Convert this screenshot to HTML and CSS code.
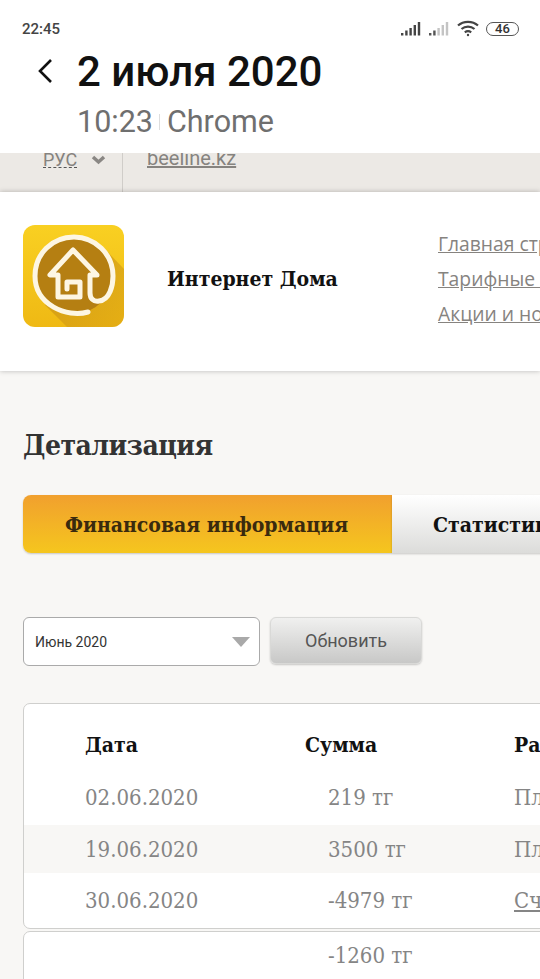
FILE: index.html
```html
<!DOCTYPE html>
<html lang="ru">
<head>
    <meta charset="UTF-8">
    <meta name="viewport" content="width=device-width, initial-scale=1.0">
    <title>Детализация</title>
    <link rel="stylesheet" href="styles.css">
</head>
<body>

    <header class="history-bar">
        <div class="status-bar">
            <span class="status-time">22:45</span>
            <div class="status-icons">
                <svg width="21" height="16" viewBox="0 0 21 16"><g fill="#444"><rect x="0" y="12" width="2.4" height="2.5"/><rect x="4.2" y="9.5" width="2.4" height="5"/><rect x="8.4" y="7" width="2.4" height="7.5"/><rect x="12.6" y="4" width="2.4" height="10.5"/><rect x="16.8" y="1" width="2.4" height="13.5"/></g></svg>
                <svg width="21" height="16" viewBox="0 0 21 16"><rect x="0" y="12" width="2.4" height="2.5" fill="#555"/><rect x="4.2" y="9.5" width="2.4" height="5" fill="#555"/><g fill="#c4c4c4"><rect x="8.4" y="7" width="2.4" height="7.5"/><rect x="12.6" y="4" width="2.4" height="10.5"/><rect x="16.8" y="1" width="2.4" height="13.5"/></g></svg>
                <svg class="wifi" width="22" height="17" viewBox="0 0 22 17" fill="none" stroke="#444" stroke-width="2.2"><path d="M1 5.5C6.5 .6 15.500 .6 21 5.500"/><path d="M4.500 9C8.200 5.800 13.800 5.800 17.500 9"/><path d="M7.800 12.300C9.800 10.800 12.200 10.800 14.200 12.300"/><circle cx="11" cy="15" r="1.200" fill="#444" stroke="none"/></svg>
                <span class="battery">46</span>
            </div>
        </div>
        <div class="history-title">
            <svg class="back" width="16" height="26" viewBox="0 0 16 26" fill="none" stroke="#111" stroke-width="2.600"><path d="M14 2 3 13l11 11"/></svg>
            <div>
                <h1>2 июля 2020</h1>
                <p class="visit"><span>10:23</span><i></i><span>Chrome</span></p>
            </div>
        </div>
    </header>

    <div class="top-strip">
        <div class="lang"><span>РУС</span>
            <svg width="15" height="10" viewBox="0 0 15 10" fill="none" stroke="#8a8784" stroke-width="3.500"><path d="M2 2l5.500 5L13 2"/></svg>
        </div>
        <a class="site-link" href="#">beeline.kz</a>
    </div>

    <section class="brand-band">
        <svg class="app-icon" width="101" height="102" viewBox="0 0 101 102">
            <defs>
                <linearGradient id="iconbg" x1="0" y1="0" x2="0" y2="1">
                    <stop offset="0" stop-color="#f9d022"/>
                    <stop offset="1" stop-color="#efb914"/>
                </linearGradient>
                <linearGradient id="iconshade" x1="0" y1="0" x2="1" y2="1">
                    <stop offset="0" stop-color="#b9821a" stop-opacity=".7"/>
                    <stop offset="1" stop-color="#d9a012" stop-opacity=".45"/>
                </linearGradient>
            </defs>
            <rect width="101" height="102" rx="12" fill="url(#iconbg)"/>
            <path d="M80 22 101 44V90a12 12 0 0 1-12 12H44L22 80Z" fill="url(#iconshade)"/>
            <circle cx="51" cy="51" r="38" fill="#b57f12"/>
            <g fill="none" stroke="#fdf6e3" stroke-width="5" stroke-linecap="round" stroke-linejoin="round">
                <path d="M65 87C44 93 12 80 12 51 12 29 29 12 51 12 72 12 90 29 90 51 90 60 87 75 76 76 70 77 67 73 67 68V50H74L50 25 27 50H35V72H57V57H44V64"/>
            </g>
        </svg>
        <strong class="brand-name">Интернет Дома</strong>
        <nav class="brand-nav">
            <a href="#">Главная страница</a>
            <a href="#">Тарифные планы</a>
            <a href="#">Акции и новости</a>
        </nav>
    </section>

    <main class="content">
        <h2>Детализация</h2>

        <div class="tabs">
            <div class="tab tab-active">Финансовая информация</div>
            <div class="tab">Статистика</div>
        </div>

        <form class="filter">
            <div class="month-select">Июнь 2020<i class="arrow"></i></div>
            <button type="button" class="refresh">Обновить</button>
        </form>

        <div class="table-box">
            <div class="row row-head"><span>Дата</span><span>Сумма</span><span>Расшифровка</span></div>
            <div class="row"><span>02.06.2020</span><span class="amount">219 тг</span><span>Платёж</span></div>
            <div class="row row-alt"><span>19.06.2020</span><span class="amount">3500 тг</span><span>Платёж</span></div>
            <div class="row"><span>30.06.2020</span><span class="amount">-4979 тг</span><span><a href="#">Счёт</a></span></div>
        </div>
        <div class="table-box total-box">
            <div class="row"><span></span><span class="amount">-1260 тг</span><span></span></div>
        </div>
    </main>

</body>
</html>
```

FILE: styles.css
```css
* {
    box-sizing: border-box;
}

html, body {
    margin: 0;
    height: 979px;
    overflow: hidden;
}

body {
    width: 540px;
    font-family: "DejaVu Serif Condensed", "DejaVu Serif", serif;
    background-color: #f8f7f5;
}

a {
    color: inherit;
}

.history-bar {
    height: 153px;
    background-color: #fff;
    font-family: Roboto, sans-serif;
}

.status-bar {
    display: flex;
    justify-content: space-between;
    align-items: center;
    height: 44px;
    padding: 13px 21px 0 22px;
}

.status-time {
    font-size: 15px;
    font-weight: 500;
    color: #444;
}

.status-icons {
    display: flex;
    align-items: center;
    gap: 7px;
}

.wifi {
    margin-left: 0;
}

.battery {
    width: 33px;
    height: 14px;
    border: 1.5px solid #555;
    border-radius: 7px;
    font-size: 13px;
    font-weight: 500;
    line-height: 11px;
    text-align: center;
    color: #333;
}

.history-title {
    display: flex;
    align-items: flex-start;
    gap: 24px;
    padding-left: 37px;
}

.back {
    margin-top: 14px;
}

.history-title h1 {
    margin: 0;
    font-size: 42px;
    font-weight: 500;
    line-height: 56px;
    color: #111;
}

.visit {
    display: flex;
    align-items: center;
    margin: 1px 0 0;
    font-size: 30.5px;
    line-height: 42px;
    color: #6f6f6f;
}

.visit i {
    width: 1px;
    height: 16px;
    margin: 0 7px 0 6px;
    background-color: #ddd;
}

.top-strip {
    display: flex;
    height: 39px;
    overflow: hidden;
    background-color: #ece9e5;
    font-family: Roboto, sans-serif;
    font-size: 20px;
    color: #86837f;
}

.lang {
    display: flex;
    align-items: flex-start;
    gap: 14px;
    width: 123px;
    height: 39px;
    padding-left: 43px;
    border-right: 1px solid #d0cdc9;
}

.lang span {
    height: 18px;
    margin-top: -3px;
    font-size: 18px;
    line-height: 20px;
    border-bottom: 1px dashed #555;
}

.lang svg {
    margin-top: 2px;
}

.site-link {
    margin: -7px 0 0 24px;
    line-height: 24px;
}

.brand-band {
    display: flex;
    align-items: center;
    height: 179px;
    padding-left: 23px;
    background-color: #fff;
    box-shadow: 0 0 5px rgba(0, 0, 0, 0.25);
    position: relative;
}

.app-icon {
    flex: none;
    margin-bottom: 11px;
}

.brand-name {
    flex: none;
    width: 271px;
    margin: 0 0 7px 43px;
    font-size: 21px;
    color: #111;
}

.brand-nav {
    display: flex;
    flex: none;
    flex-direction: column;
    gap: 11px;
    margin-bottom: 5px;
    font-family: "Open Sans", sans-serif;
    font-size: 19.300px;
    line-height: 24px;
    white-space: nowrap;
    color: #86837f;
}

.content {
    padding: 56px 0 0 23px;
}

.content h2 {
    margin: 0 0 30px;
    font-size: 28px;
    letter-spacing: -0.5px;
    line-height: 38px;
    color: #333;
}

.tabs {
    display: flex;
    width: 640px;
    height: 58px;
}

.tab {
    display: flex;
    flex: none;
    align-items: center;
    height: 58px;
    padding-left: 41px;
    font-size: 21px;
    font-weight: bold;
    color: #111;
    background: linear-gradient(#fff, #dcdcda);
    box-shadow: 0 1px 2px rgba(0, 0, 0, 0.2);
    width: 271px;
}

.tab-active {
    width: 369px;
    padding-left: 42px;
    border-radius: 8px 0 0 8px;
    color: #3a2a0e;
    background: linear-gradient(#f1a02e, #f5c61e);
}

.filter {
    display: flex;
    gap: 10px;
    margin-top: 64px;
}

.month-select {
    display: flex;
    align-items: center;
    width: 237px;
    height: 49px;
    padding-left: 11px;
    position: relative;
    border: 1.5px solid #aaa;
    border-radius: 6px;
    background-color: #fff;
    font-family: Roboto, sans-serif;
    font-size: 14px;
    color: #333;
}

.arrow {
    position: absolute;
    top: 19px;
    right: 9px;
    border-top: 10px solid #a9a9a9;
    border-left: 9px solid transparent;
    border-right: 9px solid transparent;
}

.refresh {
    width: 152px;
    height: 47px;
    padding: 0;
    border: 1px solid #d9d9d7;
    border-radius: 6px;
    background: linear-gradient(#f0f0ef, #c8c8c7);
    box-shadow: 0 1px 2px rgba(0, 0, 0, 0.2);
    font-family: Roboto, sans-serif;
    font-size: 18px;
    color: #555;
}

.table-box {
    width: 620px;
    margin-top: 37px;
    padding-top: 15px;
    padding-bottom: 2px;
    border: 1.5px solid #cfcfcd;
    border-radius: 7px;
    background-color: #fff;
}

.total-box {
    height: 60px;
    margin-top: 2px;
    padding: 0;
}

.row {
    display: grid;
    grid-template-columns: 220px 209px 1fr;
    align-items: center;
    height: 51px;
    padding-left: 61px;
    font-size: 22px;
    color: #858585;
    white-space: nowrap;
}

.row-head {
    height: 50px;
    margin-bottom: 3px;
    font-size: 21px;
    font-weight: bold;
    color: #111;
}

.row-alt {
    height: 48px;
    margin: 2px 0;
    background-color: #f8f7f5;
}

.amount {
    padding-left: 23px;
}

.total-box .row {
    height: 46px;
}
```
